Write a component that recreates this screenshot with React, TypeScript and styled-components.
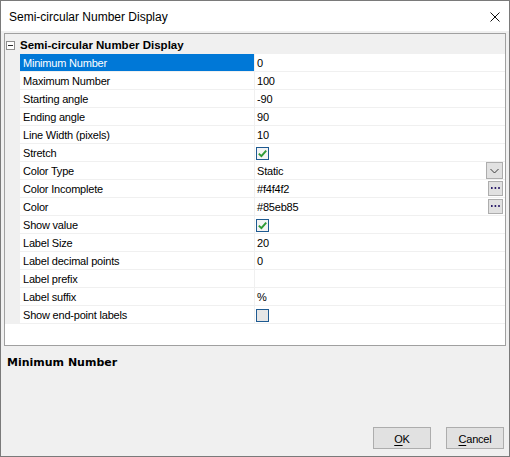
import React from "react";
import styled, { createGlobalStyle } from "styled-components";

const GlobalStyle = createGlobalStyle`
  html, body { margin: 0; padding: 0; background: #f0f0f0; }
  * { box-sizing: border-box; }
`;

const Window = styled.div`
  width: 510px;
  height: 457px;
  border: 1px solid #7a7a7a;
  background: #f0f0f0;
  display: flex;
  flex-direction: column;
  font-family: "Liberation Sans", Arial, sans-serif;
  font-size: 11px;
  color: #000;
`;

const TitleBar = styled.div`
  height: 30px;
  flex: none;
  background: #fff;
  display: flex;
  align-items: center;
  justify-content: space-between;
  padding: 2px 9px 0 8px;
`;

const TitleText = styled.span`
  font-size: 12px;
  color: #000;
`;

const CloseIcon = styled.svg`
  width: 10px;
  height: 10px;
  margin-bottom: 1px;
`;

const Body = styled.div`
  flex: 1;
  display: flex;
  flex-direction: column;
  padding: 2px 3px 7px 3px;
`;

const Grid = styled.div`
  height: 313px;
  flex: none;
  border: 1px solid #a0a0a0;
  background: #fff;
  display: flex;
  flex-direction: column;
`;

const CategoryRow = styled.div`
  height: 20px;
  background: #f0f0f0;
  display: flex;
  align-items: center;
  padding-left: 1px;
  padding-top: 1px;
`;

const Expander = styled.div`
  width: 9px;
  height: 9px;
  border: 1px solid #8f8f8f;
  background: #fff;
  margin-top: 1px;
  display: flex;
  align-items: center;
  justify-content: center;
  &::after {
    content: "";
    width: 5px;
    height: 1px;
    background: #2a2a2a;
  }
`;

const CategoryTitle = styled.span`
  margin-left: 5px;
  font-weight: bold;
  font-size: 11.5px;
`;

const Row = styled.div`
  display: grid;
  grid-template-columns: 15px 234px 1fr;
  height: 18px;
`;

const Gutter = styled.div`
  background: #f0f0f0;
`;

const LabelCell = styled.div<{ $selected?: boolean }>`
  height: 18px;
  border-bottom: 1px solid #f0f0f0;
  background: ${(p) => (p.$selected ? "#0078d7" : "#fff")};
  color: ${(p) => (p.$selected ? "#fff" : "#000")};
  padding: 1px 0 0 3px;
  line-height: 17px;
  white-space: nowrap;
  overflow: hidden;
  letter-spacing: -0.2px;
`;

const ValueCell = styled.div`
  height: 18px;
  border-bottom: 1px solid #f0f0f0;
  border-left: 1px solid #f0f0f0;
  padding-left: 2px;
  display: flex;
  align-items: center;
  justify-content: space-between;
`;

const ValueText = styled.span`
  letter-spacing: -0.2px;
  white-space: nowrap;
  line-height: 17px;
  padding-top: 2px;
`;

const CheckBox = styled.div<{ $checked?: boolean }>`
  width: 13px;
  height: 13px;
  margin-left: -1px;
  margin-top: 1px;
  border: 1px solid #1e5a91;
  background: ${(p) => (p.$checked ? "#f4f4f4" : "#e6e6e6")};
  display: flex;
  align-items: center;
  justify-content: center;
`;

const EditButton = styled.div<{ $w: number }>`
  width: ${(p) => p.$w}px;
  height: ${(p) => p.$w}px;
  margin-right: 2px;
  margin-bottom: ${(p) => (p.$w > 15 ? 0 : 1)}px;
  background: #e1e1e1;
  border: 1px solid #adadad;
  display: flex;
  align-items: center;
  justify-content: center;
`;

const EmptyArea = styled.div`
  flex: 1;
  background: #fff;
`;

const Description = styled.div`
  flex: 1;
  padding: 10px 3px;
`;

const DescTitle = styled.div`
  font-family: "DejaVu Sans", Verdana, sans-serif;
  font-weight: bold;
  font-size: 11px;
  line-height: 14px;
  color: #000;
`;

const Footer = styled.div`
  display: flex;
  justify-content: flex-end;
  gap: 15px;
  padding-right: 2px;
`;

const Button = styled.button`
  width: 58px;
  height: 22px;
  padding: 1px 0 0;
  background: #e1e1e1;
  border: 1px solid #adadad;
  font-family: "Liberation Sans", Arial, sans-serif;
  font-size: 11px;
  letter-spacing: -0.2px;
  color: #000;
  u { text-decoration: underline; text-underline-offset: 2px; }
`;

type Prop = {
  label: string;
  value?: string;
  selected?: boolean;
  check?: boolean;
  dropdown?: boolean;
  ellipsis?: boolean;
};

const rows: Prop[] = [
  { label: "Minimum Number", value: "0", selected: true },
  { label: "Maximum Number", value: "100" },
  { label: "Starting angle", value: "-90" },
  { label: "Ending angle", value: "90" },
  { label: "Line Width (pixels)", value: "10" },
  { label: "Stretch", check: true },
  { label: "Color Type", value: "Static", dropdown: true },
  { label: "Color Incomplete", value: "#f4f4f2", ellipsis: true },
  { label: "Color", value: "#85eb85", ellipsis: true },
  { label: "Show value", check: true },
  { label: "Label Size", value: "20" },
  { label: "Label decimal points", value: "0" },
  { label: "Label prefix", value: "" },
  { label: "Label suffix", value: "%" },
  { label: "Show end-point labels", check: false },
];

const Check = () => (
  <svg width="9" height="9" viewBox="0 0 9 9">
    <path d="M0.8 4.6 L3.4 7.2 L8.2 1.6" fill="none" stroke="#2e9a34" strokeWidth="1.9" />
  </svg>
);

const Chevron = () => (
  <svg width="9" height="6" viewBox="0 0 9 6">
    <path d="M0.5 1 L4.5 5 L8.5 1" fill="none" stroke="#3c3c3c" strokeWidth="1" />
  </svg>
);

const Dots = () => (
  <svg width="9" height="2" viewBox="0 0 9 2">
    <rect x="0" y="0" width="1.6" height="2" fill="#2b1d6b" />
    <rect x="3.6" y="0" width="1.6" height="2" fill="#2b1d6b" />
    <rect x="7.2" y="0" width="1.6" height="2" fill="#2b1d6b" />
  </svg>
);

export default function App() {
  return (
    <>
      <GlobalStyle />
      <Window>
        <TitleBar>
          <TitleText>Semi-circular Number Display</TitleText>
          <CloseIcon viewBox="0 0 10 10">
            <path d="M0.5 0.5 L9.5 9.5 M9.5 0.5 L0.5 9.5" stroke="#111" strokeWidth="1" />
          </CloseIcon>
        </TitleBar>
        <Body>
          <Grid>
            <CategoryRow>
              <Expander />
              <CategoryTitle>Semi-circular Number Display</CategoryTitle>
            </CategoryRow>
            {rows.map((r) => (
              <Row key={r.label}>
                <Gutter />
                <LabelCell $selected={r.selected}>{r.label}</LabelCell>
                <ValueCell>
                  {r.check !== undefined ? (
                    <CheckBox $checked={r.check}>{r.check && <Check />}</CheckBox>
                  ) : (
                    <ValueText>{r.value}</ValueText>
                  )}
                  {r.dropdown && (
                    <EditButton $w={17}>
                      <Chevron />
                    </EditButton>
                  )}
                  {r.ellipsis && (
                    <EditButton $w={15}>
                      <Dots />
                    </EditButton>
                  )}
                </ValueCell>
              </Row>
            ))}
            <EmptyArea />
          </Grid>
          <Description>
            <DescTitle>Minimum Number</DescTitle>
          </Description>
          <Footer>
            <Button>
              <u>O</u>K
            </Button>
            <Button>
              <u>C</u>ancel
            </Button>
          </Footer>
        </Body>
      </Window>
    </>
  );
}
